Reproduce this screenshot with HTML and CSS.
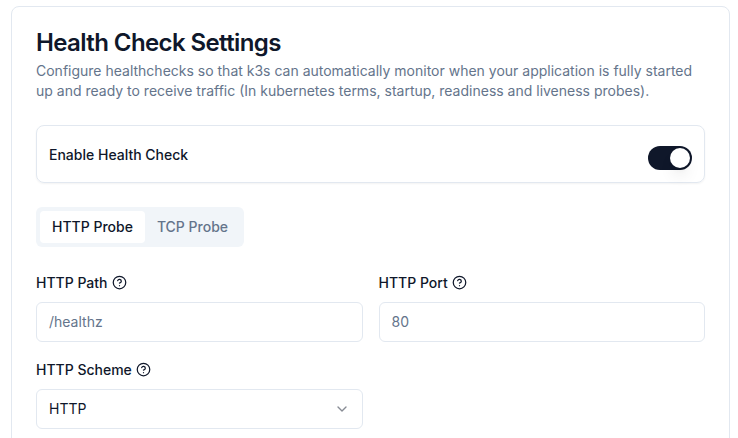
FILE: index.html
```html
<!DOCTYPE html>
<html lang="en">
<head>
    <meta charset="UTF-8">
    <meta name="viewport" content="width=device-width, initial-scale=1.0">
    <title>Health Check Settings</title>
    <link rel="stylesheet" href="styles.css">
</head>
<body>

<div class="card">
    <h1>Health Check Settings</h1>
    <p class="desc">Configure healthchecks so that k3s can automatically monitor when your application is fully started up and ready to receive traffic (In kubernetes terms, startup, readiness and liveness probes).</p>

    <div class="switch-row">
        <span class="switch-label">Enable Health Check</span>
        <span class="switch"><span class="thumb"></span></span>
    </div>

    <div class="tabs">
        <span class="tab active">HTTP Probe</span>
        <span class="tab">TCP Probe</span>
    </div>

    <div class="fields">
        <div class="field">
            <div class="label">HTTP Path
                <svg class="help" viewBox="0 0 24 24"><circle cx="12" cy="12" r="10"/><path d="M9.09 9a3 3 0 0 1 5.83 1c0 2-3 3-3 3"/><path d="M12 17h.01"/></svg>
            </div>
            <div class="input placeholder">/healthz</div>
        </div>
        <div class="field">
            <div class="label">HTTP Port
                <svg class="help" viewBox="0 0 24 24"><circle cx="12" cy="12" r="10"/><path d="M9.09 9a3 3 0 0 1 5.83 1c0 2-3 3-3 3"/><path d="M12 17h.01"/></svg>
            </div>
            <div class="input placeholder">80</div>
        </div>
        <div class="field">
            <div class="label">HTTP Scheme
                <svg class="help" viewBox="0 0 24 24"><circle cx="12" cy="12" r="10"/><path d="M9.09 9a3 3 0 0 1 5.83 1c0 2-3 3-3 3"/><path d="M12 17h.01"/></svg>
            </div>
            <div class="input select">HTTP
                <svg class="chevron" viewBox="0 0 24 24"><path d="m6 9 6 6 6-6"/></svg>
            </div>
        </div>
    </div>
</div>

</body>
</html>
```

FILE: styles.css
```css
html, body {
    height: 100%;
    overflow: hidden;
}
body {
    font-family: 'Inter', sans-serif;
    background: #fff;
    color: #0f172a;
    margin: 0;
    padding: 6px 8px 0 11px;
    box-sizing: border-box;
}
.card {
    background: #fff;
    border: 1px solid #e2e8f0;
    border-radius: 8px;
    padding: 24px;
    height: 460px;
    box-sizing: border-box;
}
h1 {
    font-size: 24px;
    line-height: 24px;
    font-weight: 600;
    letter-spacing: -0.6px;
    margin: 0;
}
.desc {
    font-size: 14px;
    line-height: 20px;
    color: #64748b;
    margin: 6px 0 0;
}
.switch-row {
    display: flex;
    justify-content: space-between;
    align-items: center;
    height: 58px;
    box-sizing: border-box;
    margin-top: 24px;
    padding: 0 12px;
    border: 1px solid #e2e8f0;
    border-radius: 8px;
    box-shadow: 0 1px 2px rgba(0, 0, 0, 0.05);
}
.switch-label {
    font-size: 14px;
    font-weight: 500;
    margin-top: 1px;
}
.switch {
    display: flex;
    justify-content: flex-end;
    align-items: center;
    width: 44px;
    height: 24px;
    margin-top: 8px;
    padding: 2px;
    box-sizing: border-box;
    background: #0f172a;
    border-radius: 12px;
}
.thumb {
    width: 20px;
    height: 20px;
    background: #fff;
    border-radius: 50%;
    box-shadow: 0 10px 15px -3px rgba(0, 0, 0, 0.1), 0 4px 6px -4px rgba(0, 0, 0, 0.1);
}
.tabs {
    display: inline-flex;
    height: 40px;
    box-sizing: border-box;
    padding: 4px;
    margin-top: 24px;
    background: #f1f5f9;
    border-radius: 6px;
    vertical-align: top;
}
.tab {
    display: flex;
    align-items: center;
    padding: 0 12px 1px;
    font-size: 14px;
    font-weight: 500;
    color: #64748b;
    border-radius: 4px;
}
.tab.active {
    background: #fff;
    color: #0f172a;
}
.fields {
    display: grid;
    grid-template-columns: 1fr 1fr;
    gap: 16px;
    margin-top: 24px;
}
.label {
    display: flex;
    align-items: center;
    gap: 4px;
    height: 22px;
    margin-bottom: 9px;
    font-size: 14px;
    font-weight: 500;
}
.help {
    width: 15px;
    height: 15px;
    fill: none;
    stroke: currentColor;
    stroke-width: 2;
    stroke-linecap: round;
    stroke-linejoin: round;
}
.input {
    display: flex;
    align-items: center;
    height: 40px;
    box-sizing: border-box;
    padding: 0 12px 1px;
    font-size: 14px;
    border: 1px solid #e2e8f0;
    border-radius: 6px;
}
.placeholder {
    color: #64748b;
}
.select {
    justify-content: space-between;
    color: #0f172a;
}
.chevron {
    width: 16px;
    height: 16px;
    fill: none;
    stroke: #0f172a;
    stroke-opacity: 0.5;
    stroke-width: 2;
    stroke-linecap: round;
    stroke-linejoin: round;
}
```
